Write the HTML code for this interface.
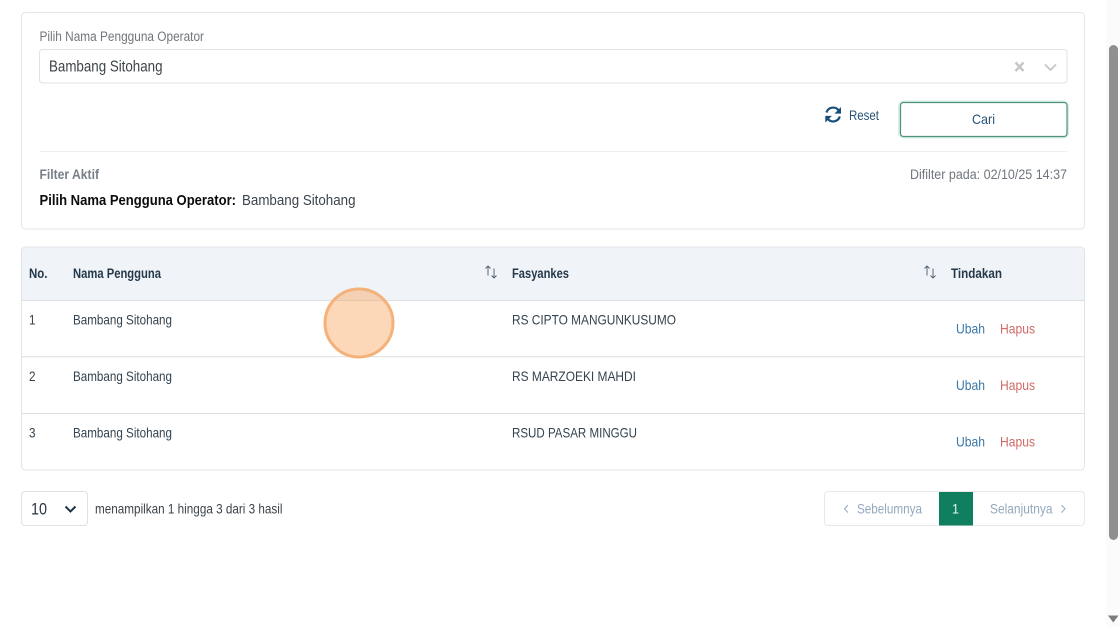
<!DOCTYPE html>
<html><head><meta charset="utf-8">
<style>
html,body{margin:0;padding:0;background:#fff;width:1120px;height:627px;overflow:hidden}
svg{display:block}
text{font-family:"Liberation Sans",sans-serif;font-size:14px;fill:#34434f}
.b{font-weight:bold}
</style></head><body>
<svg width="1120" height="627" viewBox="0 0 1120 627" xmlns="http://www.w3.org/2000/svg">
<rect width="1120" height="627" fill="#fff"/>
<!-- scrollbar -->
<rect x="1106" y="0" width="14" height="627" fill="#fbfbfb"/>
<rect x="1109" y="45" width="9" height="495" rx="4.500" fill="#8f8f8f"/>
<path d="M1108 615.500h10.500l-5.250 7z" fill="#7b7b7b"/>

<!-- filter card -->
<rect x="21.500" y="12.500" width="1063" height="216.500" rx="4" fill="#fff" stroke="#e3e5e8"/>
<text x="39.500" y="41" textLength="164.500" lengthAdjust="spacingAndGlyphs" style="font-size:13.500px;fill:#70767d">Pilih Nama Pengguna Operator</text>
<rect x="39.500" y="49.500" width="1027.500" height="33.500" rx="3" fill="#fff" stroke="#dfe1e4"/>
<text x="49" y="71.500" style="font-size:16px;fill:#3b444b" textLength="113.500" lengthAdjust="spacingAndGlyphs">Bambang Sitohang</text>
<path d="M1015.500 62.500l8 8.500m0-8.500l-8 8.500" stroke="#c6c6c6" stroke-width="2.400" fill="none"/>
<path d="M1045 64.500l5.500 5.500 5.500-5.500" stroke="#c6c6c6" stroke-width="1.800" fill="none"/>

<!-- reset -->
<g fill="none" stroke="#164f7c" stroke-width="2.200">
<path d="M826.500 112.500a6.900 6.900 0 0 1 12-2.300l1.500 1.800"/>
<path d="M839.800 116.500a6.900 6.900 0 0 1-12 2.300l-1.500-1.800"/>
</g>
<path d="M841 107v6.600h-6.600zM825.300 122.500v-6.600h6.600z" fill="#164f7c"/>
<text x="849" y="120" textLength="30" lengthAdjust="spacingAndGlyphs" style="font-size:14px;fill:#2b5378">Reset</text>
<rect x="899" y="101.500" width="169" height="36" rx="4" fill="none" stroke="#d5efe6" stroke-width="2"/>
<rect x="900.500" y="102.500" width="166.500" height="34" rx="3" fill="#fff" stroke="#4f8f7f" stroke-width="1.200"/>
<text x="972" y="124" textLength="23" lengthAdjust="spacingAndGlyphs" style="fill:#2b5378">Cari</text>

<line x1="39.500" y1="151.500" x2="1067" y2="151.500" stroke="#eceef0"/>
<text x="39.500" y="179" class="b" textLength="59.500" lengthAdjust="spacingAndGlyphs" style="font-size:13.500px;fill:#777e86">Filter Aktif</text>
<text x="910" y="179" textLength="157" lengthAdjust="spacingAndGlyphs" style="font-size:13.500px;fill:#70767d">Difilter pada: 02/10/25 14:37</text>
<text x="39.500" y="205" class="b" textLength="196.500" lengthAdjust="spacingAndGlyphs" style="font-size:15px;fill:#0c0c0c">Pilih Nama Pengguna Operator:</text>
<text x="242" y="205" textLength="113.500" lengthAdjust="spacingAndGlyphs" style="font-size:15px;fill:#3b444b">Bambang Sitohang</text>

<!-- table -->
<rect x="21.500" y="247" width="1063" height="223" rx="4" fill="#fff" stroke="#dfe2e6"/>
<path d="M22 300.500V251a3.500 3.500 0 0 1 3.500-3.500h1055a3.500 3.500 0 0 1 3.500 3.500v49.500z" fill="#f0f4f9"/>
<line x1="22" y1="300.500" x2="1084" y2="300.500" stroke="#dcdfe3"/>
<line x1="22" y1="356.800" x2="1084" y2="356.800" stroke="#dcdfe3"/>
<line x1="22" y1="413.500" x2="1084" y2="413.500" stroke="#dcdfe3"/>

<text x="29" y="278" class="b" textLength="18.500" lengthAdjust="spacingAndGlyphs" style="font-size:13.500px;fill:#24384a">No.</text>
<text x="73" y="278" class="b" textLength="88" lengthAdjust="spacingAndGlyphs" style="font-size:13.500px;fill:#24384a">Nama Pengguna</text>
<text x="512" y="278" class="b" textLength="57" lengthAdjust="spacingAndGlyphs" style="font-size:13.500px;fill:#24384a">Fasyankes</text>
<text x="951" y="278" class="b" textLength="51" lengthAdjust="spacingAndGlyphs" style="font-size:13.500px;fill:#24384a">Tindakan</text>
<g fill="none" stroke="#4a5a68" stroke-width="0.900">
<path d="M488 275.500v-9.500m-2.500 2.500l2.500-2.500 2.500 2.500M494 268.500v9.500m-2.500-2.500l2.500 2.500 2.500-2.500"/>
<path d="M927 275.500v-9.500m-2.500 2.500l2.500-2.500 2.500 2.500M933 268.500v9.500m-2.500-2.500l2.500 2.500 2.500-2.500"/>
</g>

<text x="29" y="324.500" textLength="6.500" lengthAdjust="spacingAndGlyphs">1</text>
<text x="73" y="324.500" textLength="99" lengthAdjust="spacingAndGlyphs">Bambang Sitohang</text>
<text x="512" y="324.500" textLength="164" lengthAdjust="spacingAndGlyphs">RS CIPTO MANGUNKUSUMO</text>
<text x="956" y="333.500" textLength="29" lengthAdjust="spacingAndGlyphs" style="fill:#3a78a8">Ubah</text>
<text x="1000" y="333.500" textLength="35" lengthAdjust="spacingAndGlyphs" style="fill:#cf6a66">Hapus</text>

<text x="29" y="381" textLength="6.500" lengthAdjust="spacingAndGlyphs">2</text>
<text x="73" y="381" textLength="99" lengthAdjust="spacingAndGlyphs">Bambang Sitohang</text>
<text x="512" y="381" textLength="124" lengthAdjust="spacingAndGlyphs">RS MARZOEKI MAHDI</text>
<text x="956" y="390" textLength="29" lengthAdjust="spacingAndGlyphs" style="fill:#3a78a8">Ubah</text>
<text x="1000" y="390" textLength="35" lengthAdjust="spacingAndGlyphs" style="fill:#cf6a66">Hapus</text>

<text x="29" y="437.500" textLength="6.500" lengthAdjust="spacingAndGlyphs">3</text>
<text x="73" y="437.500" textLength="99" lengthAdjust="spacingAndGlyphs">Bambang Sitohang</text>
<text x="512" y="437.500" textLength="125" lengthAdjust="spacingAndGlyphs">RSUD PASAR MINGGU</text>
<text x="956" y="446.500" textLength="29" lengthAdjust="spacingAndGlyphs" style="fill:#3a78a8">Ubah</text>
<text x="1000" y="446.500" textLength="35" lengthAdjust="spacingAndGlyphs" style="fill:#cf6a66">Hapus</text>

<!-- highlight circle -->
<circle cx="359" cy="323" r="34" fill="#f9a661" fill-opacity="0.45" stroke="#f4b27a" stroke-width="3"/>

<!-- page size -->
<rect x="21.500" y="491.500" width="66" height="34" rx="3.500" fill="#fff" stroke="#dfe1e4"/>
<text x="31" y="514.500" textLength="16" lengthAdjust="spacingAndGlyphs" style="font-size:16.500px;fill:#2a3540">10</text>
<path d="M65.500 506.500l5 5 5-5" fill="none" stroke="#1f3346" stroke-width="2"/>
<text x="95" y="513.500" textLength="187.500" lengthAdjust="spacingAndGlyphs" style="fill:#3b444b">menampilkan 1 hingga 3 dari 3 hasil</text>

<!-- pagination -->
<rect x="824.500" y="491.500" width="260" height="34" rx="3.500" fill="#fff" stroke="#e6e8eb"/>
<rect x="939" y="492" width="34" height="33.500" fill="#0f7f5f"/>
<text x="952" y="513.500" textLength="7" lengthAdjust="spacingAndGlyphs" style="fill:#e8f5f0">1</text>
<path d="M848 505l-3.500 3.800 3.500 3.800" fill="none" stroke="#9fb1c3" stroke-width="1.100"/>
<text x="857" y="513.500" textLength="65" lengthAdjust="spacingAndGlyphs" style="fill:#93a8bd">Sebelumnya</text>
<text x="990" y="513.500" textLength="62.500" lengthAdjust="spacingAndGlyphs" style="fill:#93a8bd">Selanjutnya</text>
<path d="M1061.500 505l3.500 3.800-3.500 3.800" fill="none" stroke="#9fb1c3" stroke-width="1.100"/>
</svg>
</body></html>
